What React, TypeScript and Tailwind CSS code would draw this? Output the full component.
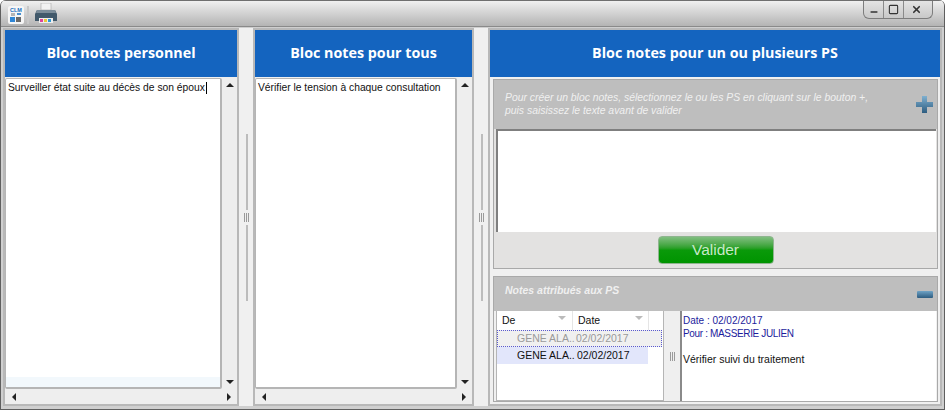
import { Minus, Square, X } from 'lucide-react'

const arial = "font-['Liberation_Sans',Arial,sans-serif]"
const paneHeader = "flex h-[47px] shrink-0 items-center justify-center bg-[#1464bf] pb-px font-['Open_Sans',sans-serif] text-[14.3px] font-bold text-white"

function Tri({ dir }: { dir: 'up' | 'down' | 'left' | 'right' }) {
  const points = {
    up: '0,5 4,1 8,5',
    down: '0,1 8,1 4,5',
    left: '5,0 5,8 1,4',
    right: '1,0 1,8 5,4',
  }[dir]
  const wide = dir === 'up' || dir === 'down'
  return (
    <svg width={wide ? 8 : 6} height={wide ? 6 : 8} className="block">
      <polygon points={points} fill="#222" />
    </svg>
  )
}

function Grip() {
  return (
    <div className="flex h-[9px] shrink-0 gap-px">
      <div className="w-px bg-[#9a9a9a]" />
      <div className="w-px bg-[#9a9a9a]" />
      <div className="w-px bg-[#9a9a9a]" />
    </div>
  )
}

function Splitter() {
  return (
    <div className="flex w-[14px] shrink-0 items-center justify-center pl-px">
      <div className="flex h-[167px] flex-col items-center">
        <div className="w-[2px] flex-1 bg-[#bcbcbc]" />
        <div className="my-[3px]">
          <Grip />
        </div>
        <div className="w-[2px] flex-1 bg-[#bcbcbc]" />
      </div>
    </div>
  )
}

function SortArrow() {
  return (
    <svg width="8" height="4" className="-mt-[5px] block">
      <polygon points="0,0 8,0 4,4" fill="#bbb" />
    </svg>
  )
}

function NotePanel({ title, text, caret, tinted, width }: { title: string; text: string; caret?: boolean; tinted?: boolean; width: string }) {
  return (
    <div className={`${width} flex shrink-0 flex-col border-2 border-[#b8b8b8]`}>
      <div className={paneHeader}>{title}</div>
      <div className="flex min-h-0 flex-1">
        <div className="mt-px flex flex-1 flex-col rounded-[2px] border-t border-r-2 border-b-2 border-l border-[#b5b5b5] bg-white">
          <div className={`${arial} flex-1 pt-[2px] pl-[2px] text-[10.3px] leading-[13px] whitespace-nowrap text-[#111]`}>
            {text}
            {caret && <span className="ml-px inline-block h-[12px] w-px align-[-3px] bg-black" />}
          </div>
          {tinted && <div className="h-[10px] shrink-0 bg-[#f2f8fc]" />}
        </div>
        <div className="flex w-[15px] shrink-0 flex-col items-center justify-between bg-[#eeeeee] pt-[5px] pb-[4px]">
          <Tri dir="up" />
          <Tri dir="down" />
        </div>
      </div>
      <div className="flex h-[15px] shrink-0 items-center justify-between bg-[#eeeeee] pr-[5px] pl-[6px]">
        <Tri dir="left" />
        <Tri dir="right" />
      </div>
    </div>
  )
}

export default function App() {
  return (
    <div className="flex h-[410px] w-[945px] flex-col overflow-hidden rounded-t-[6px] border-x border-b border-[#5f5f5f] bg-[#cfcfcf]">
      {/* title bar */}
      <div className="flex h-[27px] shrink-0 items-start justify-between border-t border-b border-t-[#6f6f6f] border-b-[#8a8a8a] bg-gradient-to-b from-[#f0f0f0] to-[#b4b4b4] pr-[11px]">
        <div className="flex items-center pt-[4px] pl-[7px]">
          <svg width="16" height="18" viewBox="0 0 16 18" className="block">
            <rect width="16" height="18" rx="2" fill="#f6f6f6" />
            <text x="8" y="6" textAnchor="middle" fontSize="5.5" fontWeight="700" fill="#1b6fc0" fontFamily="Liberation Sans">CLM</text>
            <rect x="3" y="7" width="4" height="3" fill="#b5b5b5" />
            <rect x="9" y="7" width="4" height="2" fill="#4a90d0" />
            <rect x="2" y="11" width="5" height="5" fill="#2f86d6" />
            <rect x="8" y="11" width="5" height="5" fill="#6a6a6a" />
          </svg>
          <div className="ml-[3px] h-[18px] w-[2px] bg-[#c8c8c8]" />
          <svg width="24" height="22" viewBox="0 0 24 22" className="-mt-[2px] ml-[5px] block">
            <path d="M7 0h10v7H7z" fill="#f2f2f2" stroke="#aaa" strokeWidth=".6" />
            <path d="M3 7h18l2 4v7H1v-7z" fill="#41596b" />
            <path d="M3 7h18l1 3H2z" fill="#7c8d9a" />
            <rect x="5" y="15" width="14" height="5" fill="#eee" />
            <rect x="6" y="16" width="3" height="3" fill="#e0449a" />
            <rect x="10" y="16" width="3" height="3" fill="#e8c93b" />
            <rect x="14" y="16" width="3" height="3" fill="#2f9bd6" />
          </svg>
        </div>
        <div className="flex h-[18px] w-[70px] items-center rounded-b-[6px] border-x border-b border-[#7d7d7d] bg-gradient-to-b from-[#e4e4e4] to-[#c8c8c8]">
          <div className="flex h-full w-[20px] items-end justify-center border-r border-[#8a8a8a] pb-[1px]">
            <Minus size={10} strokeWidth={3.4} color="#333" />
          </div>
          <div className="flex h-full w-[20px] items-center justify-center border-r border-[#8a8a8a]">
            <Square size={11} strokeWidth={2.4} color="#333" />
          </div>
          <div className="flex h-full flex-1 items-center justify-center pr-[3px]">
            <X size={11} strokeWidth={3.6} color="#333" />
          </div>
        </div>
      </div>

      {/* body */}
      <div className="flex min-h-0 flex-1 px-[2px] pt-[1px] pb-[3px]">
        <div className="flex min-w-0 flex-1 bg-[#f0f0f0]">
          <NotePanel width="w-[236px]" title="Bloc notes personnel" text="Surveiller état suite au décès de son époux" caret tinted />
          <Splitter />
          <NotePanel width="w-[221px]" title="Bloc notes pour tous" text="Vérifier le tension à chaque consultation" />
          <Splitter />

          <div className="flex min-w-0 flex-1 flex-col border-2 border-[#b8b8b8]">
            <div className={paneHeader}>Bloc notes pour un ou plusieurs PS</div>

            <div className="mt-[2px] mr-[2px] ml-[3px] flex h-[190px] shrink-0 flex-col border border-[#a9a9a9] bg-[#e3e2e1]">
              <div className="flex h-[49px] shrink-0 items-center justify-between bg-[#bebebe] pr-[4px] pl-[11px]">
                <p className={`${arial} -mt-[2px] text-[10.4px] leading-[13px] text-[#f0f0f0] italic`}>
                  Pour créer un bloc notes, sélectionnez le ou les PS en cliquant sur le bouton +,
                  <br />
                  puis saisissez le texte avant de valider
                </p>
                <svg width="17" height="17" viewBox="0 0 17 17" className="block">
                  <defs>
                    <linearGradient id="plus" x1="0" y1="0" x2="0" y2="1">
                      <stop offset="0" stopColor="#7fb0d0" />
                      <stop offset="1" stopColor="#2d5c80" />
                    </linearGradient>
                  </defs>
                  <path d="M6 0h5v6h6v5h-6v6H6v-6H0V6h6z" fill="url(#plus)" />
                </svg>
              </div>
              <div className="mr-px ml-[2px] h-[103px] shrink-0 border-t-2 border-l-2 border-[#7f7f7f] bg-white" />
              <div className="flex flex-1 items-center justify-center">
                <button className={`${arial} h-[28px] w-[116px] rounded-[4px] border border-[#8fb58f] bg-gradient-to-b from-[#7fbe7f] via-[#0a9a0a] to-[#009400] text-[15.5px] text-[#c8e8c8]`}>
                  Valider
                </button>
              </div>
            </div>

            <div className="mt-[7px] mr-[2px] mb-[2px] ml-[3px] flex min-h-0 flex-1 flex-col border border-[#a9a9a9] bg-[#f0f0f0]">
              <div className="flex h-[34px] shrink-0 items-center justify-between bg-[#bebebe] pr-[4px] pl-[11px]">
                <span className={`${arial} -mt-[7px] text-[10.5px] font-bold text-[#f0f0f0] italic`}>Notes attribués aux PS</span>
                <div className="h-[7px] w-[16px] rounded-[1px] bg-gradient-to-b from-[#6fa3c6] to-[#2d5c80]" />
              </div>
              <div className="flex min-h-0 flex-1 pr-px pl-[2px]">
                <div className="w-[168px] shrink-0 border-r border-b border-l border-[#b5b5b5] bg-white">
                  <div className={`${arial} flex h-[19px] text-[10.5px] text-[#111]`}>
                    <div className="flex w-[76px] items-center justify-between border-r border-[#e5e5e5] pr-[6px] pl-[5px]">
                      De
                      <SortArrow />
                    </div>
                    <div className="flex w-[76px] items-center justify-between border-r border-[#e5e5e5] pr-[5px] pl-[5px]">
                      Date
                      <SortArrow />
                    </div>
                  </div>
                  <div className={`${arial} text-[10.5px]`}>
                    <div className="flex h-[17px] w-[165px] items-center border border-dotted border-[#5a5ad0] bg-[#f0f0f0] text-[#9a9a9a]">
                      <span className="ml-[19px] w-[59px] shrink-0 whitespace-nowrap">GENE ALA..</span>
                      <span>02/02/2017</span>
                    </div>
                    <div className="flex h-[17px] w-[151px] items-center bg-[#e2e6fb] text-[#111]">
                      <span className="ml-[20px] w-[60px] shrink-0 whitespace-nowrap">GENE ALA..</span>
                      <span>02/02/2017</span>
                    </div>
                  </div>
                </div>
                <div className="flex w-[16px] shrink-0 items-center justify-center bg-[#efefef]">
                  <Grip />
                </div>
                <div className={`${arial} min-w-0 flex-1 border-l-2 border-[#8a8a8a] bg-white pt-[3px] pl-[1px] leading-[13px]`}>
                  <div className="text-[10px] text-[#1c1c9c]">Date : 02/02/2017</div>
                  <div className="text-[10px] tracking-[-0.35px] text-[#1c1c9c]">Pour : MASSERIE JULIEN</div>
                  <div className="mt-[13px] text-[10.5px] text-[#111]">Vérifier suivi du traitement</div>
                </div>
              </div>
            </div>
          </div>
        </div>
      </div>
    </div>
  )
}
